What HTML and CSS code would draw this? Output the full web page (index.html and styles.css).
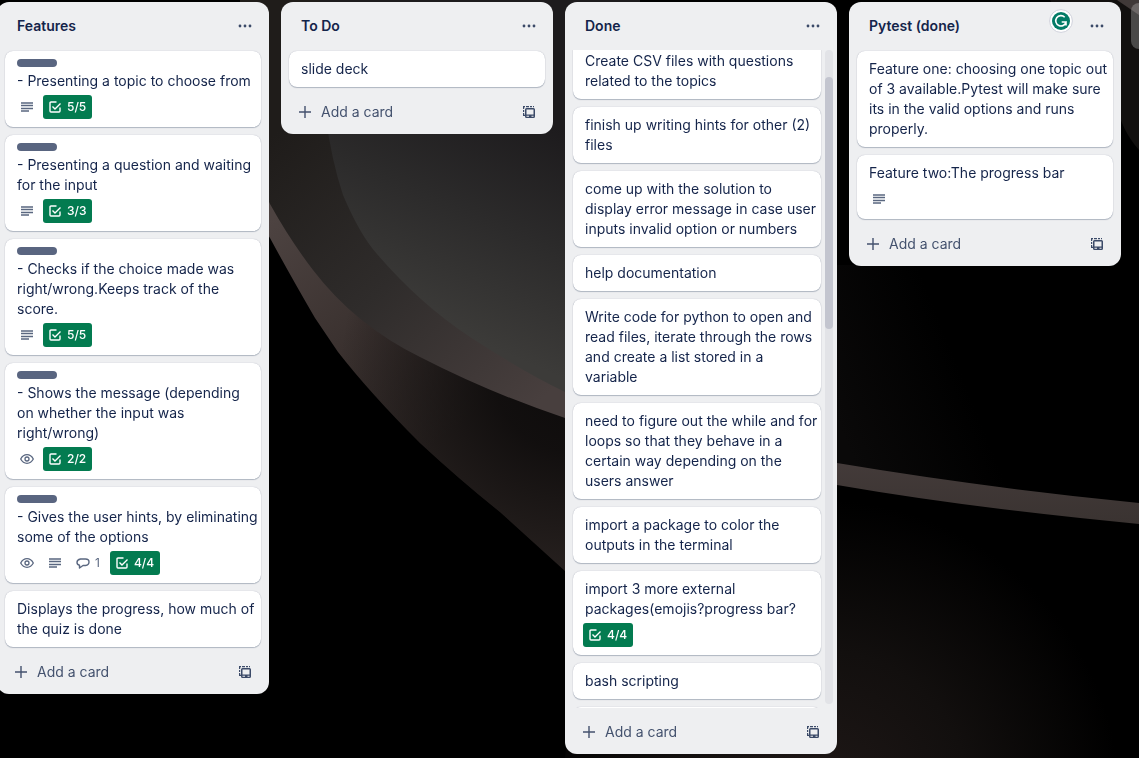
FILE: index.html
```html
<!DOCTYPE html>
<html lang="en">
<head>
<meta charset="utf-8">
<title>Board</title>
<link rel="stylesheet" href="styles.css">
</head>
<body>
<svg class="wallpaper" viewBox="0 0 1139 758" preserveAspectRatio="none" aria-hidden="true">
  <defs>
    <linearGradient id="disc" gradientUnits="userSpaceOnUse" x1="540" y1="120" x2="450" y2="330">
      <stop offset="0" stop-color="#1d1b1d"/><stop offset=".5" stop-color="#2c2b2b"/><stop offset="1" stop-color="#3c3b39"/>
    </linearGradient>
    <linearGradient id="rim" gradientUnits="userSpaceOnUse" x1="290" y1="120" x2="540" y2="400">
      <stop offset="0" stop-color="#1f1c1a"/><stop offset=".5" stop-color="#2f2c2b"/><stop offset="1" stop-color="#483f3e"/>
    </linearGradient>
    <linearGradient id="under" gradientUnits="userSpaceOnUse" x1="270" y1="220" x2="440" y2="440">
      <stop offset="0" stop-color="#4d4341"/><stop offset=".5" stop-color="#3b3230"/><stop offset="1" stop-color="#2c2523"/>
    </linearGradient>
    <radialGradient id="shade" gradientUnits="userSpaceOnUse" cx="575" cy="370" r="235">
      <stop offset="0" stop-color="#0d0b0b"/><stop offset=".35" stop-color="#0d0b0b" stop-opacity=".85"/><stop offset="1" stop-color="#0d0b0b" stop-opacity="0"/>
    </radialGradient>
    <linearGradient id="band" x1="0" y1="0" x2="0" y2="1">
      <stop offset="0" stop-color="#453c3b"/><stop offset="1" stop-color="#3a3331"/>
    </linearGradient>
    <radialGradient id="floor" gradientUnits="userSpaceOnUse" cx="820" cy="800" r="300">
      <stop offset="0" stop-color="#1f1817"/><stop offset=".5" stop-color="#120f0e"/><stop offset="1" stop-color="#000"/>
    </radialGradient>
    <linearGradient id="haze" gradientUnits="userSpaceOnUse" x1="837" y1="420" x2="960" y2="370">
      <stop offset="0" stop-color="#0a0909"/><stop offset="1" stop-color="#000"/>
    </linearGradient>
  </defs>
  <rect width="1139" height="758" fill="#000"/>
  <path id="bowl" d="M240 0V190Q255 215 270 238Q290 275 315 318L338 352Q370 393 420 443Q460 480 500 512L565 571L640 632V0Z" fill="url(#under)"/>
  <path d="M240 0V190Q255 215 270 238Q290 275 315 318L338 352Q370 393 420 443Q460 480 500 512L565 571L640 632V0Z" fill="url(#shade)"/>
  <path d="M240 0V140L270 204Q290 240 313 270Q355 325 420 357Q490 393 565 418L640 432V0Z" fill="url(#rim)"/>
  <path d="M320 0Q318 120 343 195Q360 235 377 254Q420 304 470 337Q520 370 565 392L640 415V0Z" fill="url(#disc)"/>
  <path d="M700 0H1139V560H700Z" fill="#000"/>
  <path d="M837 265H1139V510L837 480Z" fill="url(#haze)"/>
  <path d="M600 480H837L1139 518V758H565Z" fill="url(#floor)"/>
  <path d="M780 452L837 463Q980 487 1139 503V524Q970 508 837 485L780 474Z" fill="url(#band)"/>
  <path d="M1050 0H1139V150Q1121 130 1115 100Z" fill="#12100f"/>
  <path d="M1117 0H1139V15Z" fill="#403938"/>
</svg>

<svg class="sprite" aria-hidden="true">
  <symbol id="i-more" viewBox="0 0 16 16"><g fill="currentColor"><circle cx="3" cy="8" r="1.400"/><circle cx="8" cy="8" r="1.400"/><circle cx="13" cy="8" r="1.400"/></g></symbol>
  <symbol id="i-plus" viewBox="0 0 16 16"><path d="M8 2v12M2 8h12" fill="none" stroke="currentColor" stroke-width="1.400"/></symbol>
  <symbol id="i-template" viewBox="0 0 16 16"><path d="M2 2.600H4M5 2.600H8M9 2.600H11M12 2.600H13M2.600 3V5M2.600 6V8M2.600 9V11.400H4" fill="none" stroke="currentColor" stroke-width="1.200"/><path d="M5.500 4H12.500Q14 4 14 5.500V12.500Q14 14 12.500 14H5.500Q4 14 4 12.500V5.500Q4 4 5.500 4ZM5.500 5.500V10.500H12.500V5.500ZM5.500 11.800V12.800H8V11.800ZM10.500 11.800V12.800H12.500V11.800Z" fill="currentColor" fill-rule="evenodd"/></symbol>
  <symbol id="i-desc" viewBox="0 0 16 16"><path d="M2 4H14M2 6.500H14M2 9.500H14M2 12H10" fill="none" stroke="currentColor" stroke-width="1.400"/></symbol>
  <symbol id="i-eye" viewBox="0 0 16 16"><path d="M1.700 8Q4 3.700 8 3.700T14.300 8Q12 12.300 8 12.300T1.700 8Z" fill="none" stroke="currentColor" stroke-width="1.300"/><circle cx="8" cy="8" r="2" fill="none" stroke="currentColor" stroke-width="1.300"/></symbol>
  <symbol id="i-check" viewBox="0 0 16 16"><path d="M9.500 3H4Q3 3 3 4V12Q3 13 4 13H12Q13 13 13 12V8.500M5.500 7.500L8 10L13.500 4.500" fill="none" stroke="currentColor" stroke-width="1.400"/></symbol>
  <symbol id="i-comment" viewBox="0 0 16 16"><path d="M5.500 4H10.500Q14 4 14 7T10.500 10.500H8L4.500 13V10.300Q2 9.700 2 7.200T5.500 4Z" fill="none" stroke="currentColor" stroke-width="1.400" stroke-linejoin="round"/></symbol>
</svg>

<main class="board">
  <section class="column">
    <header class="column-head"><h2>Features</h2><button class="icon-button" aria-label="List actions"><svg><use href="#i-more"/></svg></button></header>
    <div class="cards">
      <article class="card"><span class="label"></span><p>- Presenting a topic to choose from</p>
        <div class="badges"><span class="badge"><svg><use href="#i-desc"/></svg></span><span class="badge count done"><svg><use href="#i-check"/></svg>5/5</span></div></article>
      <article class="card"><span class="label"></span><p>- Presenting a question and waiting for the input</p>
        <div class="badges"><span class="badge"><svg><use href="#i-desc"/></svg></span><span class="badge count done"><svg><use href="#i-check"/></svg>3/3</span></div></article>
      <article class="card"><span class="label"></span><p>- Checks if the choice made was right/wrong.Keeps track of the score.</p>
        <div class="badges"><span class="badge"><svg><use href="#i-desc"/></svg></span><span class="badge count done"><svg><use href="#i-check"/></svg>5/5</span></div></article>
      <article class="card"><span class="label"></span><p>- Shows the message (depending on whether the input was right/wrong)</p>
        <div class="badges"><span class="badge"><svg><use href="#i-eye"/></svg></span><span class="badge count done"><svg><use href="#i-check"/></svg>2/2</span></div></article>
      <article class="card"><span class="label"></span><p>- Gives the user hints, by eliminating some of the options</p>
        <div class="badges"><span class="badge"><svg><use href="#i-eye"/></svg></span><span class="badge"><svg><use href="#i-desc"/></svg></span><span class="badge count"><svg><use href="#i-comment"/></svg>1</span><span class="badge count done"><svg><use href="#i-check"/></svg>4/4</span></div></article>
      <article class="card"><p>Displays the progress, how much of the quiz is done</p></article>
    </div>
    <footer class="column-foot"><button class="add-card"><svg><use href="#i-plus"/></svg>Add a card</button><button class="icon-button" aria-label="Create from template"><svg><use href="#i-template"/></svg></button></footer>
  </section>

  <section class="column">
    <header class="column-head"><h2>To Do</h2><button class="icon-button" aria-label="List actions"><svg><use href="#i-more"/></svg></button></header>
    <div class="cards">
      <article class="card"><p>slide deck</p></article>
    </div>
    <footer class="column-foot"><button class="add-card"><svg><use href="#i-plus"/></svg>Add a card</button><button class="icon-button" aria-label="Create from template"><svg><use href="#i-template"/></svg></button></footer>
  </section>

  <section class="column column-full">
    <header class="column-head"><h2>Done</h2><button class="icon-button" aria-label="List actions"><svg><use href="#i-more"/></svg></button></header>
    <div class="scroll-area">
      <div class="cards scrolled">
        <article class="card"><p>Create CSV files with questions related to the topics</p></article>
        <article class="card"><p>finish up writing hints for other (2) files</p></article>
        <article class="card"><p>come up with the solution to display error message in case user inputs invalid option or numbers</p></article>
        <article class="card"><p>help documentation</p></article>
        <article class="card"><p>Write code for python to open and read files, iterate through the rows and create a list stored in a variable</p></article>
        <article class="card"><p>need to figure out the while and for loops so that they behave in a certain way depending on the users answer</p></article>
        <article class="card"><p>import a package to color the outputs in the terminal</p></article>
        <article class="card"><p>import 3 more external packages(emojis?progress bar?</p>
          <div class="badges"><span class="badge count done"><svg><use href="#i-check"/></svg>4/4</span></div></article>
        <article class="card"><p>bash scripting</p></article>
        <article class="card"></article>
      </div>
      <div class="scrollbar"><span class="thumb"></span></div>
    </div>
    <footer class="column-foot"><button class="add-card"><svg><use href="#i-plus"/></svg>Add a card</button><button class="icon-button" aria-label="Create from template"><svg><use href="#i-template"/></svg></button></footer>
  </section>

  <section class="column">
    <header class="column-head"><h2>Pytest (done)</h2><button class="icon-button" aria-label="List actions"><svg><use href="#i-more"/></svg></button></header>
    <button class="checker" aria-label="Writing assistant"><svg viewBox="0 0 24 24"><circle cx="12" cy="12" r="11.400" fill="#fff" stroke="#d0d2dc"/><circle cx="12" cy="12" r="9" fill="#037b66"/><path d="M15.700 8.200A5.200 5.200 0 1 0 17 13H12.700M17 13V16.500" fill="none" stroke="#fff" stroke-width="1.600"/></svg></button>
    <div class="cards">
      <article class="card"><p>Feature one: choosing one topic out of 3 available.Pytest will make sure its in the valid options and runs properly.</p></article>
      <article class="card"><p>Feature two:The progress bar</p>
        <div class="badges"><span class="badge"><svg><use href="#i-desc"/></svg></span></div></article>
    </div>
    <footer class="column-foot"><button class="add-card"><svg><use href="#i-plus"/></svg>Add a card</button><button class="icon-button" aria-label="Create from template"><svg><use href="#i-template"/></svg></button></footer>
  </section>

  <button class="add-list" aria-label="Add another list"></button>
</main>
</body>
</html>
```

FILE: styles.css
```css
* { box-sizing: border-box; }

body {
  margin: 0;
  height: 100vh;
  overflow: hidden;
  background: #000;
  color: #14244a;
  font: 14px/20px Inter, "Liberation Sans", sans-serif;
}

h2, p { margin: 0; }

button {
  border: 0;
  padding: 0;
  background: none;
  color: inherit;
  font: inherit;
}

svg { display: block; }

.sprite { display: none; }

.wallpaper {
  position: fixed;
  inset: 0;
  width: 100%;
  height: 100%;
  z-index: -1;
}

.board {
  display: flex;
  align-items: flex-start;
  gap: 12px;
  height: 100%;
  margin-left: -3px;
  padding: 2px 0 4px;
}

.column {
  position: relative;
  display: flex;
  flex: 0 0 272px;
  flex-direction: column;
  max-height: 100%;
  border-radius: 12px;
  background: #eeeff1;
}

.column-full { height: 100%; }

.column-head {
  display: flex;
  flex: none;
  align-items: center;
  justify-content: space-between;
  height: 48px;
  padding: 0 8px 0 20px;
}

.column-head h2 {
  font-size: 14px;
  font-weight: 600;
}

.icon-button {
  display: grid;
  place-items: center;
  width: 32px;
  height: 32px;
  color: #3b4a68;
}

.icon-button svg,
.add-card svg,
.badge svg {
  flex: none;
  width: 16px;
  height: 16px;
}

.cards {
  display: flex;
  flex-direction: column;
  gap: 8px;
  padding: 1px 8px;
}

.card {
  flex: none;
  min-height: 36px;
  padding: 8px 2px 8px 12px;
  border-radius: 8px;
  background: #fff;
  box-shadow: 0 1px 1px #091e4240, 0 0 1px #091e424f;
}

.label {
  display: block;
  width: 40px;
  height: 8px;
  margin-bottom: 4px;
  border-radius: 4px;
  background: #596580;
}

.badges {
  display: flex;
  gap: 4px;
  margin: 4px 0 0 -2px;
}

.badge {
  display: flex;
  align-items: center;
  gap: 4px;
  height: 24px;
  padding: 0 4px;
  border-radius: 3px;
  color: #5a6780;
  font-size: 12px;
}

.badge.count { padding-right: 6px; }

.badge.done {
  background: #037b50;
  color: #fff;
  font-weight: 500;
}

.column-foot {
  display: flex;
  flex: none;
  justify-content: space-between;
  padding: 8px 8px 6px;
}

.add-card {
  display: flex;
  flex: 1;
  align-items: center;
  gap: 8px;
  height: 32px;
  padding-left: 8px;
  color: #44526e;
}

.scroll-area {
  display: flex;
  flex: 1;
  min-height: 0;
  overflow: hidden;
}

.scrolled {
  flex: 1;
  margin-top: -8px;
  padding-right: 4px;
}

.scrollbar {
  display: grid;
  grid-template-rows: 27fr 252fr 375fr;
  width: 8px;
  margin: 0 4px 4px 0;
  border-radius: 4px;
  background: #e2e3e7;
}

.thumb {
  grid-row: 2;
  border-radius: 4px;
  background: #c3c5cf;
}

.checker {
  position: absolute;
  top: 7px;
  right: 48px;
}

.checker svg {
  width: 24px;
  height: 24px;
}

.add-list {
  flex: 1 1 0;
  min-width: 0;
  max-width: 272px;
  height: 46px;
  margin: 1px 0 0 -2px;
  border-radius: 12px 0 0 12px;
  background: #ffffff3d;
}
```
